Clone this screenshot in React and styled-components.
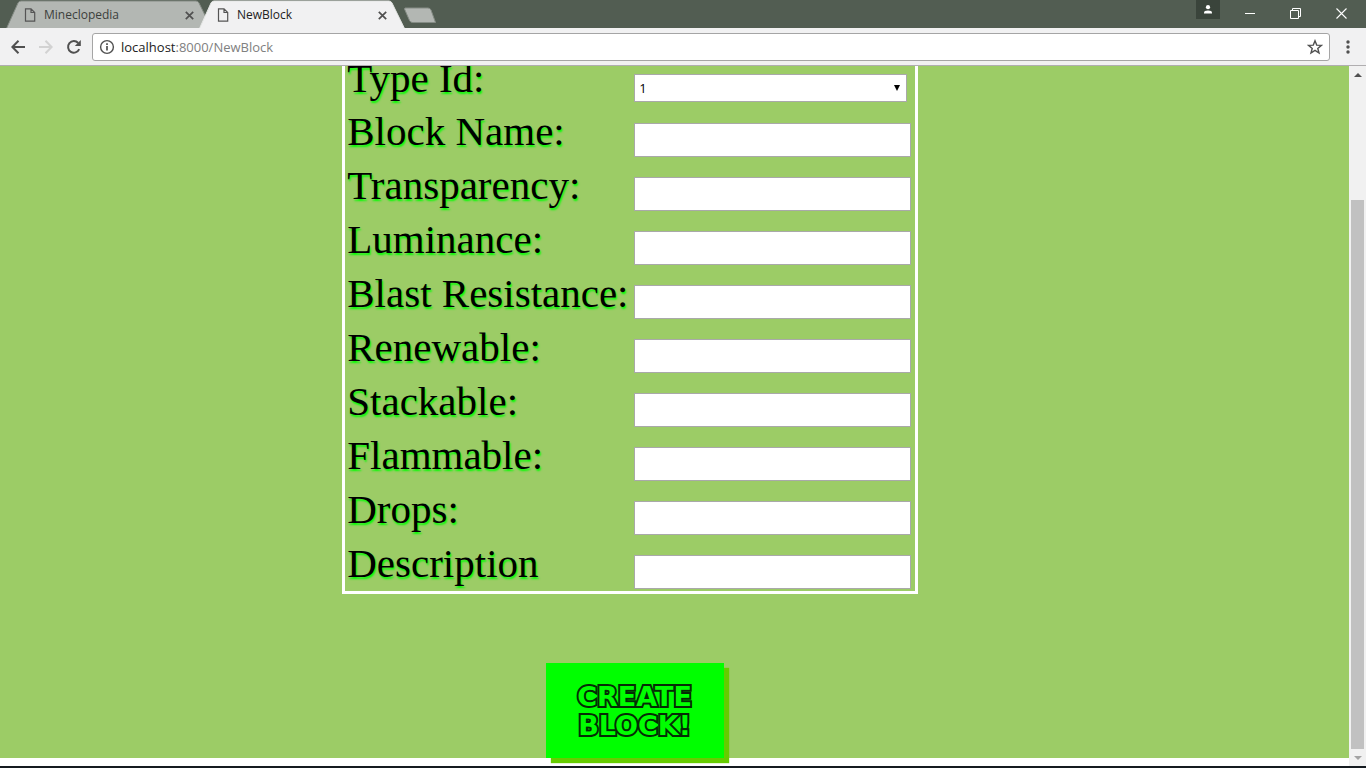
import React from "react";
import styled, { createGlobalStyle, css } from "styled-components";

const GlobalStyle = createGlobalStyle`
  *, *::before, *::after { box-sizing: border-box; }
  body { margin: 0; overflow: hidden; }
  button, input, select { margin: 0; padding: 0; border: 0; background: none; font: inherit; color: inherit; border-radius: 0; }
`;

const uiFont = css`
  font-family: "Open Sans", "Noto Sans", sans-serif;
`;

const Window = styled.div`
  display: flex;
  flex-direction: column;
  height: 100vh;
  background: #fff;
`;

const TitleBar = styled.header`
  ${uiFont}
  display: flex;
  flex: none;
  height: 28px;
  padding-left: 6px;
  background: #525d52;
`;

const Tabs = styled.nav`
  display: flex;
  flex: 1;
`;

const Tab = styled.div`
  position: relative;
  display: flex;
  align-items: center;
  width: 206px;
  height: 28px;
  padding: 2px 16px 0 18px;
  margin-right: -13px;
  font-size: 12px;
  line-height: 16px;
  color: ${(p) => (p.$active ? "#222" : "#3c403c")};
  z-index: ${(p) => (p.$active ? 1 : 0)};
`;

const TabShape = styled.svg`
  position: absolute;
  inset: 0;
`;

const TabLink = styled.a`
  position: relative;
  display: flex;
  align-items: center;
  gap: 8px;
  flex: 1;
  color: inherit;
  text-decoration: none;
`;

const IconButton = styled.button`
  position: relative;
  display: flex;
  align-items: center;
  justify-content: center;
  flex: none;
  width: ${(p) => p.$w}px;
  height: ${(p) => p.$h}px;
  background: ${(p) => p.$bg || "transparent"};
`;

const NewTab = styled(IconButton)`
  margin: 7px 0 0 11px;
`;

const WindowButtons = styled.div`
  display: flex;
  align-items: flex-start;
  gap: 6px;
`;

const Toolbar = styled.div`
  ${uiFont}
  display: flex;
  align-items: center;
  flex: none;
  height: 38px;
  padding-left: 4px;
  background: #f1f1f2;
  border-bottom: 1px solid #b0aeb0;
`;

const AddressBar = styled.div`
  display: flex;
  align-items: center;
  flex: 1;
  height: 28px;
  margin-left: 4px;
  padding: 0 6px;
  gap: 6px;
  background: #fff;
  border: 1px solid #a5a5a5;
  border-radius: 3px;
`;

const Address = styled.a`
  flex: 1;
  font-size: 13px;
  line-height: 18px;
  color: #808080;
  text-decoration: none;
`;

const Host = styled.span`
  color: #222;
`;

const Viewport = styled.div`
  display: flex;
  flex: 1;
  min-height: 0;
`;

const Scroller = styled.main`
  flex: 1;
  overflow: hidden;
`;

const Page = styled.form`
  display: flow-root;
  background: #9ccc66;
`;

const Fields = styled.div`
  width: 576px;
  margin: -17px 0 0 calc(25% + 5px);
  padding: 0 2px;
  border: 3px solid #fff;
`;

const Row = styled.div`
  display: grid;
  grid-template-columns: 287px 1fr;
  align-items: end;
  height: ${(p) => (p.$short ? 53 : 54)}px;
`;

const Label = styled.label`
  align-self: start;
  font-family: "Liberation Serif", "Times New Roman", serif;
  font-size: 41px;
  line-height: 52px;
  white-space: nowrap;
  color: #000;
  text-shadow: 1px 2px 2px #0f0;
`;

const fieldBox = css`
  background: #fff;
  border: 1px solid #a9a9a9;
  font-family: "Liberation Sans", Arial, sans-serif;
  font-size: 13px;
`;

const TextInput = styled.input.attrs({ type: "text" })`
  && {
    ${fieldBox}
    width: 277px;
    height: 34px;
    margin-bottom: 2px;
    padding: 0 4px;
  }
`;

const SelectWrap = styled.div`
  position: relative;
  width: 273px;
  height: 28px;
  margin-bottom: 3px;
`;

const Select = styled.select`
  && {
    ${fieldBox}
    appearance: none;
    width: 100%;
    height: 100%;
    padding: 0 4px;
    font-family: "Open Sans", sans-serif;
    color: #000;
  }
`;

const SelectArrow = styled.svg`
  position: absolute;
  right: 7px;
  top: 11px;
  pointer-events: none;
`;

const CreateButton = styled.button`
  display: block;
  width: 178px;
  height: 95px;
  margin: 69px 0 0 calc(40% + 6px);
  background: #0f0;
  box-shadow: 5px 5px 1px #6c0;
  && {
    font-family: "DejaVu Sans", sans-serif;
    font-size: 27px;
    font-weight: 700;
    line-height: 29px;
    color: #0f0;
  }
  -webkit-text-stroke: 4px #052b05;
  paint-order: stroke fill;
`;

const ScrollBar = styled.aside`
  display: flex;
  flex-direction: column;
  align-items: center;
  width: 17px;
  background: #f1f1f1;
`;

const Track = styled.div`
  flex: 1;
  width: 13px;
  padding-top: 117px;
`;

const Thumb = styled.div`
  height: 100%;
  background: #c1c1c1;
`;

const TaskbarEdge = styled.footer`
  flex: none;
  height: 2px;
  background: #151b20;
`;

const textFields = [
  "Block Name:",
  "Transparency:",
  "Luminance:",
  "Blast Resistance:",
  "Renewable:",
  "Stackable:",
  "Flammable:",
  "Drops:",
  "Description",
];

function BrowserTab({ title, active }) {
  return (
    <Tab $active={active}>
      <TabShape width="206" height="28" aria-hidden="true">
        <path
          d="M0.5 28.5 L12 3 Q13 1 15 1 H190 Q192 1 193 3 L205.5 28.5"
          fill={active ? "#f1f1f2" : "#b3b7b3"}
          stroke={active ? "#e4e6e4" : "#858c85"}
        />
      </TabShape>
      <TabLink href="#">
        <svg width="12" height="14" fill="none" stroke="#555" strokeWidth="1.2" aria-hidden="true">
          <path d="M1.5 0.8 H7 L10.7 4.5 V13.2 H1.5 Z M7 0.8 V4.5 H10.7" />
        </svg>
        {title}
      </TabLink>
      <IconButton $w={14} $h={16} aria-label="Close tab">
        <svg width="9" height="9" stroke="#505050" strokeWidth="1.7">
          <path d="M0.8 0.8 L8.2 8.2 M8.2 0.8 L0.8 8.2" />
        </svg>
      </IconButton>
    </Tab>
  );
}

export default function App() {
  return (
    <>
      <GlobalStyle />
      <Window>
        <TitleBar>
          <Tabs>
            <BrowserTab title="Mineclopedia" />
            <BrowserTab title="NewBlock" active />
            <NewTab $w={34} $h={17} aria-label="New tab">
              <svg width="34" height="17">
                <path d="M2 1 H25 Q27 1 28 3 L32.5 15.5 H9.5 Q7.5 15.5 6.5 13.5 L1.5 2 Z" fill="#b3b7b3" stroke="#858c85" />
              </svg>
            </NewTab>
          </Tabs>
          <WindowButtons>
            <IconButton $w={24} $h={19} $bg="#3a443b" aria-label="Profile">
              <svg width="10" height="10" fill="#fff">
                <circle cx="5" cy="2.2" r="2.1" />
                <path d="M1 8.5 V7.5 Q1 5.4 5 5.4 Q9 5.4 9 7.5 V8.5 Z" />
              </svg>
            </IconButton>
            <IconButton $w={48} $h={27} aria-label="Minimize">
              <svg width="10" height="3"><path d="M0 1.5 H10" stroke="#fff" /></svg>
            </IconButton>
            <IconButton $w={30} $h={27} aria-label="Restore">
              <svg width="11" height="11" fill="none" stroke="#fff">
                <path d="M0.5 2.5 H8.5 V10.5 H0.5 Z M2.5 2.5 V0.5 H10.5 V8.5 H8.5" />
              </svg>
            </IconButton>
            <IconButton $w={50} $h={27} aria-label="Close">
              <svg width="11" height="11" stroke="#fff" strokeWidth="1.1">
                <path d="M0.5 0.5 L10.5 10.5 M10.5 0.5 L0.5 10.5" />
              </svg>
            </IconButton>
          </WindowButtons>
        </TitleBar>

        <Toolbar>
          <IconButton $w={28} $h={28} aria-label="Back">
            <svg width="14" height="14" fill="none" stroke="#505050" strokeWidth="2">
              <path d="M14 7 H1.5 M7.5 0.8 L1.4 7 L7.5 13.2" />
            </svg>
          </IconButton>
          <IconButton $w={28} $h={28} aria-label="Forward">
            <svg width="14" height="14" fill="none" stroke="#d2d2d2" strokeWidth="2">
              <path d="M0 7 H12.5 M6.5 0.8 L12.6 7 L6.5 13.2" />
            </svg>
          </IconButton>
          <IconButton $w={28} $h={28} aria-label="Reload">
            <svg width="16" height="16" viewBox="0 0 16 16">
              <path d="M13.2 10.2 A5.8 5.8 0 1 1 12.2 4" fill="none" stroke="#505050" strokeWidth="2" />
              <path d="M14.8 1 V7 H8.8 Z" fill="#505050" />
            </svg>
          </IconButton>
          <AddressBar>
            <svg width="16" height="16" fill="none" stroke="#505050" aria-hidden="true">
              <circle cx="8" cy="8" r="6.4" strokeWidth="1.4" />
              <path d="M8 7 V11.6 M8 4.3 V5.9" strokeWidth="1.7" />
            </svg>
            <Address href="#">
              <Host>localhost</Host>:8000/NewBlock
            </Address>
            <IconButton $w={16} $h={16} aria-label="Bookmark this page">
              <svg width="16" height="16" fill="none" stroke="#505050" strokeWidth="1.4">
                <path d="M8 1.8 L9.7 6.1 L14.4 6.4 L10.8 9.4 L12 14 L8 11.4 L4 14 L5.2 9.4 L1.6 6.4 L6.3 6.1 Z" />
              </svg>
            </IconButton>
          </AddressBar>
          <IconButton $w={36} $h={28} aria-label="Menu">
            <svg width="4" height="14" fill="#505050">
              <circle cx="2" cy="2" r="1.7" />
              <circle cx="2" cy="7" r="1.7" />
              <circle cx="2" cy="12" r="1.7" />
            </svg>
          </IconButton>
        </Toolbar>

        <Viewport>
          <Scroller>
            <Page onSubmit={(e) => e.preventDefault()}>
              <Fields>
                <Row $short>
                  <Label htmlFor="type-id">Type Id:</Label>
                  <SelectWrap>
                    <Select id="type-id" defaultValue="1">
                      <option>1</option>
                    </Select>
                    <SelectArrow width="6" height="6" aria-hidden="true">
                      <path d="M0 0 H6 L3 6 Z" />
                    </SelectArrow>
                  </SelectWrap>
                </Row>
                {textFields.map((name, i) => (
                  <Row key={name}>
                    <Label htmlFor={`field-${i}`}>{name}</Label>
                    <TextInput id={`field-${i}`} />
                  </Row>
                ))}
              </Fields>
              <CreateButton type="submit">
                CREATE
                <br />
                BLOCK!
              </CreateButton>
            </Page>
          </Scroller>
          <ScrollBar>
            <IconButton $w={17} $h={17} aria-label="Scroll up">
              <svg width="8" height="4"><path d="M0 4 L4 0 L8 4 Z" fill="#505050" /></svg>
            </IconButton>
            <Track>
              <Thumb />
            </Track>
            <IconButton $w={17} $h={17} aria-label="Scroll down">
              <svg width="8" height="4"><path d="M0 0 L4 4 L8 0 Z" fill="#a3a3a3" /></svg>
            </IconButton>
          </ScrollBar>
        </Viewport>
        <TaskbarEdge />
      </Window>
    </>
  );
}
